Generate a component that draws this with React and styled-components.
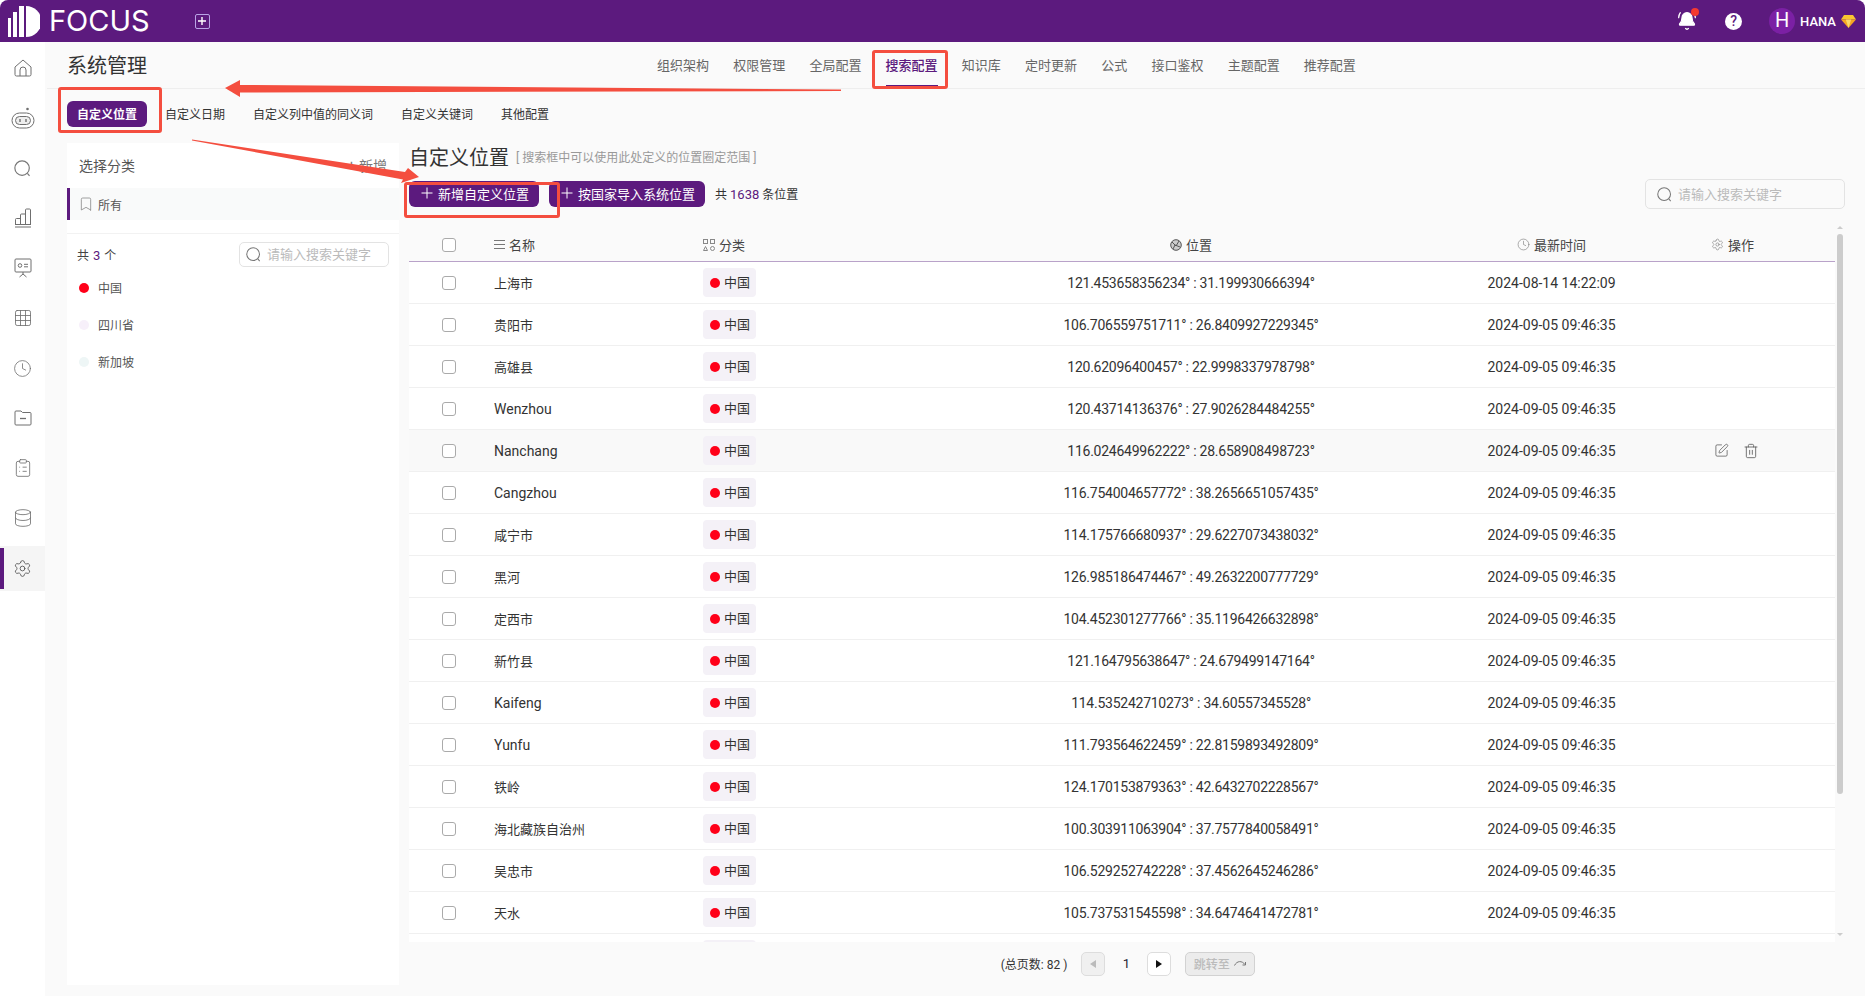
import React from 'react';
import styled, { createGlobalStyle } from 'styled-components';
import { BellRing, Bookmark, Clock, Database, Settings, SquarePen, Trash2, ClipboardList, Grid3x3 } from 'lucide-react';

const PURPLE = '#5c1a7e';

const GlobalStyle = createGlobalStyle`
    html, body {
        margin: 0;
        height: 100%;
        overflow: hidden;
        background: #fff;
        color: #333;
        font-family: Roboto, "Noto Sans CJK SC", sans-serif;
    }
`;

const rows = [
    ['上海市', '121.453658356234° : 31.199930666394°', '2024-08-14 14:22:09'],
    ['贵阳市', '106.706559751711° : 26.8409927229345°'],
    ['高雄县', '120.62096400457° : 22.9998337978798°'],
    ['Wenzhou', '120.43714136376° : 27.9026284484255°'],
    ['Nanchang', '116.024649962222° : 28.658908498723°'],
    ['Cangzhou', '116.754004657772° : 38.2656651057435°'],
    ['咸宁市', '114.175766680937° : 29.6227073438032°'],
    ['黑河', '126.985186474467° : 49.2632200777729°'],
    ['定西市', '104.452301277766° : 35.1196426632898°'],
    ['新竹县', '121.164795638647° : 24.679499147164°'],
    ['Kaifeng', '114.535242710273° : 34.60557345528°'],
    ['Yunfu', '111.793564622459° : 22.8159893492809°'],
    ['铁岭', '124.170153879363° : 42.6432702228567°'],
    ['海北藏族自治州', '100.303911063904° : 37.7577840058491°'],
    ['吴忠市', '106.529252742228° : 37.4562645246286°'],
    ['天水', '105.737531545598° : 34.6474641472781°'],
];

const navItems = ['组织架构', '权限管理', '全局配置', '搜索配置', '知识库', '定时更新', '公式', '接口鉴权', '主题配置', '推荐配置'];
const subTabs = ['自定义位置', '自定义日期', '自定义列中值的同义词', '自定义关键词', '其他配置'];
const categories = [['中国', '#ff0019'], ['四川省', '#f7f0fa'], ['新加坡', '#eef6f6']];

const SearchGlyph = ({ size = 14 }) => (
    <svg width={size} height={size} viewBox="0 0 16 16" fill="none" stroke="#777" strokeWidth="1.1">
        <circle cx="7.6" cy="7.6" r="6.8" />
        <path d="M12.6 12.6L14.6 15" />
    </svg>
);

const SmallPlus = () => (
    <svg width="12" height="12" viewBox="0 0 12 12" stroke="#fff" strokeWidth="1">
        <path d="M6 .5v11M.5 6h11" />
    </svg>
);

const sideIcons = [
    <svg width="18" height="18" viewBox="0 0 18 18" fill="none" stroke="#6f6f6f" strokeWidth="1"><path d="M1 8L9 1l8 7v7.500a1.500 1.500 0 0 1-1.500 1.500h-13A1.500 1.500 0 0 1 1 15.500Z" /><path d="M6 17v-6a3 3 0 0 1 6 0v6" /></svg>,
    <svg width="24" height="22" viewBox="0 0 24 22" fill="none" stroke="#6f6f6f" strokeWidth="1"><circle cx="16.500" cy="2" r="1.300" fill="#6f6f6f" stroke="none" /><rect x="1" y="6" width="22" height="15" rx="7.500" /><rect x="4.500" y="9.500" width="15" height="8" rx="4" fill="#eee" /><path d="M9 12v3M15 12v3" strokeWidth="1.400" /></svg>,
    <SearchGlyph size={17} />,
    <svg width="18" height="20" viewBox="0 0 18 20" fill="none" stroke="#6f6f6f" strokeWidth="1"><path d="M1.500 16v-4.500a1 1 0 0 1 1-1h4v5.500M6.500 16V7a1 1 0 0 1 1-1h4v10M11.500 16V2a1 1 0 0 1 1-1h3a1 1 0 0 1 1 1v14" /><path d="M1 16.500h16M1 19h16" /></svg>,
    <svg width="18" height="20" viewBox="0 0 18 20" fill="none" stroke="#6f6f6f" strokeWidth="1"><rect x="1" y="1" width="16" height="13" rx="1" /><circle cx="6" cy="7.500" r="1.800" /><path d="M10 6.300h4M10 8.800h4M9 14v2M5.500 19L9 16l3.500 3" /></svg>,
    <Grid3x3 size={20} color="#6f6f6f" strokeWidth={1} />,
    <Clock size={19} color="#6f6f6f" strokeWidth={1} />,
    <svg width="18" height="16" viewBox="0 0 18 16" fill="none" stroke="#6f6f6f" strokeWidth="1"><path d="M1 2a1 1 0 0 1 1-1h5l1.500 1.500H16a1 1 0 0 1 1 1V14a1 1 0 0 1-1 1H2a1 1 0 0 1-1-1Z" /><path d="M6 8.500h6" strokeWidth="1.300" /></svg>,
    <ClipboardList size={20} color="#6f6f6f" strokeWidth={1} />,
    <Database size={20} color="#6f6f6f" strokeWidth={1} />,
    <Settings size={19} color="#555" strokeWidth={1.100} />,
];

const App = () => (
    <Page>
        <GlobalStyle />
        <Header>
            <Brand>
                <svg width="32" height="32" viewBox="0 0 32 32" fill="#fff">
                    <rect x="0" y="13" width="3" height="19" />
                    <rect x="5" y="7" width="4" height="25" />
                    <rect x="11" y="1" width="5" height="31" />
                    <path d="M18 1a15.500 15.500 0 0 1 0 31Z" />
                </svg>
                <BrandName>FOCUS</BrandName>
            </Brand>
            <AddTab>
                <svg width="8" height="8" viewBox="0 0 8 8" stroke="#fff" strokeWidth="1.400"><path d="M4 0v8M0 4h8" /></svg>
            </AddTab>
            <HeaderRight>
                <BellWrap>
                    <BellRing size={20} color="#fff" fill="#fff" strokeWidth={1.500} />
                    <RedDot />
                </BellWrap>
                <Help>?</Help>
                <Avatar>H</Avatar>
                <UserName>HANA</UserName>
                <svg width="15" height="13" viewBox="0 0 15 13">
                    <path d="M3 0h9l3 4.500H0Z" fill="#f9c531" />
                    <path d="M0 4.500h15L7.500 13Z" fill="#f5a623" />
                    <path d="M4.800 4.500h5.400L7.500 13Z" fill="#fbd86a" />
                </svg>
            </HeaderRight>
        </Header>
        <Body>
            <Sidebar>
                {sideIcons.map((icon, i) => (
                    <SideItem key={i} $active={i === 10}>{icon}</SideItem>
                ))}
            </Sidebar>
            <Main>
                <TitleBar>
                    <PageTitle>系统管理</PageTitle>
                    <Nav>
                        {navItems.map((item) => (
                            <NavItem key={item} $active={item === '搜索配置'}>{item}</NavItem>
                        ))}
                    </Nav>
                </TitleBar>
                <SubTabs>
                    {subTabs.map((tab, i) => (
                        <SubTab key={tab} $active={i === 0}>{tab}</SubTab>
                    ))}
                </SubTabs>
                <Content>
                    <LeftPanel>
                        <PanelHead>
                            <span>选择分类</span>
                            <AddLink>+ 新增</AddLink>
                        </PanelHead>
                        <AllRow>
                            <Bookmark size={16} color="#888" strokeWidth={1.200} />
                            所有
                        </AllRow>
                        <CountRow>
                            <span>共 <Accent $gap="1px">3</Accent> 个</span>
                            <SearchBox $w="150px" $h="25px" $pad="6px">
                                <SearchGlyph size={15} />
                                <SearchInput placeholder="请输入搜索关键字" readOnly />
                            </SearchBox>
                        </CountRow>
                        {categories.map(([name, color]) => (
                            <CategoryRow key={name}>
                                <Dot $color={color} />
                                {name}
                            </CategoryRow>
                        ))}
                    </LeftPanel>
                    <RightArea>
                        <TitleRow>
                            <SectionTitle>自定义位置</SectionTitle>
                            <Hint>[ 搜索框中可以使用此处定义的位置圈定范围 ]</Hint>
                        </TitleRow>
                        <Toolbar>
                            <PrimaryButton><SmallPlus />新增自定义位置</PrimaryButton>
                            <PrimaryButton><SmallPlus />按国家导入系统位置</PrimaryButton>
                            <Total>共 <Accent>1638</Accent> 条位置</Total>
                            <SearchBox $w="200px" $h="30px" $pad="11px">
                                <SearchGlyph size={15} />
                                <SearchInput placeholder="请输入搜索关键字" readOnly />
                            </SearchBox>
                        </Toolbar>
                        <TableWrap>
                            <Table>
                                <HeadRow>
                                    <CheckCell><CheckBox /></CheckCell>
                                    <HeadCell>
                                        <svg width="11" height="9" viewBox="0 0 11 9" stroke="#777"><path d="M0 .5h11M0 4.500h11M0 8.500h11" /></svg>
                                        名称
                                    </HeadCell>
                                    <HeadCell>
                                        <svg width="12" height="12" viewBox="0 0 12 12" fill="none" stroke="#888"><rect x=".5" y=".5" width="4" height="4" /><rect x="7.500" y=".5" width="4" height="4" /><path d="M2.500 7.500l2 4h-4Z" /><circle cx="9.500" cy="9.500" r="2" /></svg>
                                        分类
                                    </HeadCell>
                                    <HeadCell $center>
                                        <svg width="12" height="12" viewBox="0 0 12 12" fill="#ccc" stroke="#555"><circle cx="6" cy="6" r="5.300" /><path d="M2 3l4 4 3-5M3 10l2-4 5 2" fill="none" /></svg>
                                        位置
                                    </HeadCell>
                                    <HeadCell $center>
                                        <Clock size={13} color="#777" strokeWidth={1.100} />
                                        最新时间
                                    </HeadCell>
                                    <HeadCell $inset="59px">
                                        <Settings size={13} color="#777" strokeWidth={1.100} />
                                        操作
                                    </HeadCell>
                                </HeadRow>
                                <RowList>
                                    {rows.map(([name, position, time], i) => (
                                        <Row key={name} $hover={i === 4}>
                                            <CheckCell><CheckBox /></CheckCell>
                                            <NameCell $cjk={!/^[A-Za-z]/.test(name)}>{name}</NameCell>
                                            <div>
                                                <Tag>
                                                    <Dot $color="#ff0019" $low />
                                                    中国
                                                </Tag>
                                            </div>
                                            <ValueCell $tight>{position}</ValueCell>
                                            <ValueCell>{time || '2024-09-05 09:46:35'}</ValueCell>
                                            <ActionCell>
                                                {i === 4 && (
                                                    <>
                                                        <SquarePen size={15} color="#555" strokeWidth={1.200} />
                                                        <Trash2 size={16} color="#555" strokeWidth={1.200} />
                                                    </>
                                                )}
                                            </ActionCell>
                                        </Row>
                                    ))}
                                    {/* 다음 행은 태그 윗부분만 살짝 보임 */}
                                    <Row>
                                        <span />
                                        <span />
                                        <div><Tag /></div>
                                    </Row>
                                </RowList>
                            </Table>
                            <ScrollRail>
                                <ScrollArrow />
                                <ScrollThumb />
                                <ScrollArrow $down />
                            </ScrollRail>
                        </TableWrap>
                        <Pagination>
                            <PageInfo>(总页数: 82 )</PageInfo>
                            <PageButton $disabled>
                                <svg width="6" height="8" viewBox="0 0 6 8" fill="#bbb"><path d="M6 0v8L0 4Z" /></svg>
                            </PageButton>
                            <PageNum>1</PageNum>
                            <PageButton>
                                <svg width="6" height="8" viewBox="0 0 6 8" fill="#111"><path d="M0 0v8l6-4Z" /></svg>
                            </PageButton>
                            <JumpButton>
                                跳转至
                                <svg width="13" height="7" viewBox="0 0 13 7" fill="none" stroke="#777"><path d="M.5 5.500C3 .5 8 .5 11 4.500M11.500 2v3h-3" /></svg>
                            </JumpButton>
                        </Pagination>
                    </RightArea>
                </Content>
            </Main>
        </Body>

        {/* 스크린샷 위에 그려진 빨간 표시 */}
        <MarkBox $left={58} $top={87} $w={104} $h={46} />
        <MarkBox $left={872} $top={50} $w={76} $h={39} />
        <MarkBox $left={404} $top={182} $w={156} $h={36} />
        <MarkArrows viewBox="0 0 1865 996" width="1865" height="996">
            <polygon points="225,88 240,80 240,85 841,89.500 841,91 240,92.500 240,97" fill="#f44e3f" />
            <polygon points="192,139.500 405,172 408,168 419,177 401,183 403,179.500 192,140.500" fill="#f44e3f" />
        </MarkArrows>
    </Page>
);

const Page = styled.div`
    position: relative;
    width: 100vw;
    height: 100vh;
    display: flex;
    flex-direction: column;
    overflow: hidden;
`;

const Header = styled.header`
    flex: none;
    height: 42px;
    display: flex;
    align-items: center;
    padding: 0 9px 0 8px;
    background: ${PURPLE};
    border-radius: 8px 8px 0 0;
`;

const Brand = styled.div`
    display: flex;
    align-items: center;
    gap: 9px;
`;

const BrandName = styled.div`
    font-family: Inter, sans-serif;
    font-size: 29px;
    font-weight: 400;
    line-height: 42px;
    letter-spacing: 0;
    color: #fff;
`;

const AddTab = styled.div`
    width: 13px;
    height: 13px;
    margin-left: 45px;
    display: flex;
    align-items: center;
    justify-content: center;
    border: 1px solid #b9a3e6;
    border-radius: 2px;
`;

const HeaderRight = styled.div`
    margin-left: auto;
    display: flex;
    align-items: center;
`;

const BellWrap = styled.div`
    position: relative;
    width: 20px;
    height: 20px;
`;

const RedDot = styled.span`
    position: absolute;
    top: -3px;
    right: -2px;
    width: 8px;
    height: 8px;
    border-radius: 50%;
    background: #f5392f;
`;

const Help = styled.div`
    width: 17px;
    height: 17px;
    margin-left: 28px;
    border-radius: 50%;
    background: #fff;
    color: ${PURPLE};
    font-size: 14px;
    font-weight: 500;
    line-height: 17px;
    text-align: center;
`;

const Avatar = styled.div`
    width: 26px;
    height: 26px;
    margin-left: 27px;
    border-radius: 50%;
    background: #7b20a4;
    color: #fff;
    font-size: 20px;
    line-height: 25px;
    text-align: center;
`;

const UserName = styled.div`
    margin: 0 5px;
    color: #fff;
    font-size: 13px;
    font-weight: 500;
`;

const Body = styled.div`
    flex: 1;
    min-height: 0;
    display: flex;
`;

const Sidebar = styled.nav`
    flex: none;
    width: 45px;
    padding-top: 3.5px;
    background: #fff;
`;

const SideItem = styled.div`
    position: relative;
    height: 45px;
    margin-bottom: 5px;
    display: flex;
    align-items: center;
    justify-content: center;
    background: ${(props) => (props.$active ? '#f5f5f5' : 'transparent')};

    &::before {
        content: '';
        display: ${(props) => (props.$active ? 'block' : 'none')};
        position: absolute;
        left: 0;
        top: 2px;
        bottom: 2px;
        width: 4px;
        background: ${PURPLE};
    }
`;

const Main = styled.main`
    flex: 1;
    min-width: 0;
    display: flex;
    flex-direction: column;
    padding-bottom: 11px;
    background: #fafafa;
`;

const TitleBar = styled.div`
    flex: none;
    height: 44px;
    margin-left: 2px;
    padding: 0 0 2px 20px;
    display: flex;
    align-items: center;
    border-bottom: 1px solid #eee;
`;

const PageTitle = styled.h1`
    margin: 0;
    font-size: 20px;
    font-weight: 400;
    color: #333;
`;

const Nav = styled.div`
    height: 100%;
    margin-left: 510px;
    display: flex;
    gap: 24.2px;
`;

const NavItem = styled.div`
    position: relative;
    display: flex;
    align-items: center;
    font-size: 13px;
    font-weight: ${(props) => (props.$active ? 500 : 400)};
    color: ${(props) => (props.$active ? PURPLE : '#666')};

    &::after {
        content: '';
        display: ${(props) => (props.$active ? 'block' : 'none')};
        position: absolute;
        left: 0;
        right: 0;
        bottom: -1px;
        height: 2px;
        background: ${PURPLE};
    }
`;

const SubTabs = styled.div`
    flex: none;
    margin: 12px 0 16px 22px;
    display: flex;
    gap: 8px;
`;

const SubTab = styled.div`
    height: 26px;
    padding: 0 10px;
    border-radius: 6px;
    font-size: 12px;
    font-weight: ${(props) => (props.$active ? 700 : 400)};
    line-height: 28px;
    color: ${(props) => (props.$active ? '#fff' : '#333')};
    background: ${(props) => (props.$active ? PURPLE : 'transparent')};
`;

const Content = styled.div`
    flex: 1;
    min-height: 0;
    margin-left: 22px;
    padding-right: 20px;
    display: flex;
    gap: 10px;
`;

const LeftPanel = styled.section`
    flex: none;
    width: 332px;
    background: #fff;
`;

const PanelHead = styled.div`
    height: 43px;
    padding: 0 12px 2px;
    display: flex;
    align-items: center;
    justify-content: space-between;
    font-size: 14px;
    color: #555;
`;

const AddLink = styled.span`
    color: #777;
`;

const AllRow = styled.div`
    height: 32px;
    padding-left: 8px;
    display: flex;
    align-items: center;
    gap: 4px;
    border-left: 3px solid ${PURPLE};
    background: #f9fafa;
    font-size: 12px;
    color: #555;
`;

const CountRow = styled.div`
    margin-top: 13px;
    height: 30px;
    padding: 5px 10px 0;
    display: flex;
    align-items: center;
    justify-content: space-between;
    border-top: 1px solid #f2f2f2;
    font-size: 12px;
    color: #444;
`;

const Accent = styled.span`
    margin: 0 ${(props) => props.$gap || '0'};
    font-size: 13px;
    color: ${PURPLE};
`;

const SearchBox = styled.label`
    box-sizing: border-box;
    width: ${(props) => props.$w};
    height: ${(props) => props.$h};
    padding: 0 ${(props) => props.$pad};
    display: flex;
    align-items: center;
    gap: 6px;
    margin-left: auto;
    border: 1px solid #e3e3e3;
    border-radius: 5px;
    background: transparent;
`;

const SearchInput = styled.input`
    flex: 1;
    min-width: 0;
    padding: 0;
    border: 0;
    outline: 0;
    background: none;
    font-family: inherit;
    font-size: 13px;

    &::placeholder {
        color: #bbb;
        opacity: 1;
    }
`;

const CategoryRow = styled.div`
    height: 37px;
    padding-left: 12px;
    display: flex;
    align-items: center;
    gap: 9px;
    font-size: 12px;
    color: #555;
`;

const Dot = styled.span`
    flex: none;
    width: 10px;
    height: 10px;
    margin-top: ${(props) => (props.$low ? '4px' : '0')};
    border-radius: 50%;
    background: ${(props) => props.$color};
`;

const RightArea = styled.section`
    flex: 1;
    min-width: 0;
    display: flex;
    flex-direction: column;
`;

const TitleRow = styled.div`
    height: 26px;
    padding-bottom: 2px;
    display: flex;
    align-items: center;
    gap: 7px;
`;

const SectionTitle = styled.h2`
    margin: 0;
    font-size: 20px;
    font-weight: 400;
    color: #333;
`;

const Hint = styled.span`
    font-size: 12px;
    color: #999;
`;

const Toolbar = styled.div`
    height: 30px;
    margin-top: 8px;
    display: flex;
    align-items: center;
    gap: 10px;
`;

const PrimaryButton = styled.button`
    box-sizing: border-box;
    height: 26px;
    padding: 0 10px 2px 12px;
    display: flex;
    align-items: center;
    gap: 5px;
    border: 0;
    border-radius: 6px;
    background: ${PURPLE};
    color: #fff;
    font-family: inherit;
    font-size: 13px;
`;

const Total = styled.span`
    padding-bottom: 2px;
    font-size: 12px;
    color: #333;
`;

const TableWrap = styled.div`
    flex: 1;
    min-height: 0;
    margin-top: 11px;
    display: flex;
`;

const Table = styled.div`
    flex: 1;
    min-width: 0;
    display: flex;
    flex-direction: column;
`;

const columns = '85px 209px 228px 520px 201px 1fr';

const HeadRow = styled.div`
    flex: none;
    box-sizing: border-box;
    height: 42px;
    padding-top: 8px;
    display: grid;
    grid-template-columns: ${columns};
    align-items: center;
    border-bottom: 1px solid #b9a2c9;
`;

const HeadCell = styled.div`
    display: flex;
    align-items: center;
    justify-content: ${(props) => (props.$center ? 'center' : 'flex-start')};
    gap: 4px;
    padding-left: ${(props) => props.$inset || '0'};
    font-size: 13px;
    color: #444;
`;

const CheckCell = styled.div`
    padding-left: 33px;
    display: flex;
`;

const CheckBox = styled.span`
    box-sizing: border-box;
    width: 14px;
    height: 14px;
    border: 1px solid #aaa;
    border-radius: 3px;
    background: #fff;
`;

const RowList = styled.div`
    flex: 1;
    min-height: 0;
    overflow: hidden;
`;

const Row = styled.div`
    box-sizing: border-box;
    height: 42px;
    display: grid;
    grid-template-columns: ${columns};
    align-items: center;
    border-bottom: 1px solid #f0f0f0;
    background: ${(props) => (props.$hover ? '#f9f9f9' : '#fff')};
`;

const NameCell = styled.div`
    font-size: ${(props) => (props.$cjk ? '13px' : '14px')};
    color: #333;
`;

const Tag = styled.div`
    box-sizing: border-box;
    width: 53px;
    height: 29px;
    margin-bottom: 1px;
    padding: 0 0 2px 7px;
    display: flex;
    align-items: center;
    gap: 4px;
    border-radius: 4px;
    background: #f4f1f7;
    font-size: 13px;
    color: #333;
`;

const ValueCell = styled.div`
    font-size: 14px;
    letter-spacing: ${(props) => (props.$tight ? '-0.25px' : 'normal')};
    text-align: center;
    color: #333;
`;

const ActionCell = styled.div`
    padding-left: 62px;
    display: flex;
    align-items: center;
    gap: 14px;
`;

const ScrollRail = styled.div`
    flex: none;
    width: 10px;
    display: flex;
    flex-direction: column;
    align-items: center;
`;

const ScrollArrow = styled.div`
    flex: none;
    margin: ${(props) => (props.$down ? 'auto 0 6px' : '6px 0 0')};
    width: 0;
    height: 0;
    border-left: 3px solid transparent;
    border-right: 3px solid transparent;
    border-bottom: ${(props) => (props.$down ? '0' : '3px solid #ccc')};
    border-top: ${(props) => (props.$down ? '3px solid #ccc' : '0')};
`;

const ScrollThumb = styled.div`
    flex: none;
    width: 6px;
    height: 560px;
    margin-top: 5px;
    border-radius: 3px;
    background: #ccc;
`;

const Pagination = styled.div`
    flex: none;
    height: 43px;
    padding-left: 2px;
    display: flex;
    align-items: center;
    justify-content: center;
`;

const PageInfo = styled.span`
    margin-right: 14px;
    font-size: 12px;
    color: #333;
`;

const PageButton = styled.div`
    box-sizing: border-box;
    width: 24px;
    height: 24px;
    display: flex;
    align-items: center;
    justify-content: center;
    border: 1px solid #ddd;
    border-radius: 5px;
    background: ${(props) => (props.$disabled ? '#f0f0f0' : '#fff')};
`;

const PageNum = styled.span`
    width: 42px;
    text-align: center;
    font-size: 13px;
    color: #223;
`;

const JumpButton = styled.div`
    box-sizing: border-box;
    width: 70px;
    height: 24px;
    margin-left: 14px;
    display: flex;
    align-items: center;
    justify-content: center;
    gap: 4px;
    border: 1px solid #d2d2d2;
    border-radius: 5px;
    background: #ececec;
    font-size: 12px;
    font-weight: 500;
    color: #bbb;
`;

const MarkBox = styled.div`
    position: absolute;
    box-sizing: border-box;
    left: ${(props) => props.$left}px;
    top: ${(props) => props.$top}px;
    width: ${(props) => props.$w}px;
    height: ${(props) => props.$h}px;
    border: 3px solid #f44e3f;
    border-radius: 3px;
    pointer-events: none;
`;

const MarkArrows = styled.svg`
    position: absolute;
    left: 0;
    top: 0;
    pointer-events: none;
`;

export default App;
